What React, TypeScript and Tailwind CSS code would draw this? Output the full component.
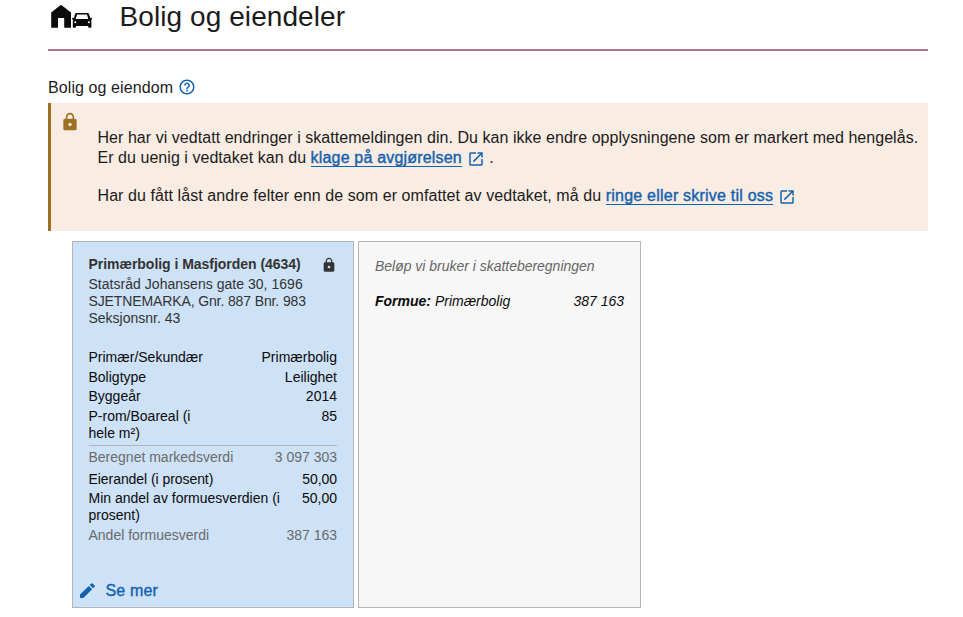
import type { ReactNode } from "react";
import { MdHelpOutline, MdLock, MdOpenInNew } from "react-icons/md";

function HouseCarIcon() {
  return (
    <svg className="ml-[3px] mt-[5px] h-[24px] w-[42px] shrink-0" viewBox="0 0 42 24" fill="#0b0b0b">
      <path d="M9 0.4 Q10 -0.4 11 0.4 L20 7.6 V22.8 H13.2 V13 H7 V22.8 H0.2 V7.6 Z" />
      <path
        fillRule="evenodd"
        d="M25.5 8 H36.5 Q37.7 8 38 9 L39.3 13 L41 12.7 V14.4 L40 14.7 Q40.4 15.5 40.4 16.5 V22 Q40.4 22.8 39.6 22.8 H38 Q37.2 22.8 37.2 22 V21 H25 V22 Q25 22.8 24 22.8 H22.6 Q21.8 22.8 21.8 22 V16.5 Q21.8 15.5 22.2 14.7 L21.2 14.4 V12.7 L22.9 13 L24 9 Q24.3 8 25.5 8 Z M26 9.6 L24.7 14 H37.3 L36 9.6 Z M24.3 16.2 A1 1 0 1 0 24.3 18.2 A1 1 0 1 0 24.3 16.2 Z M37.9 16.2 A1 1 0 1 0 37.9 18.2 A1 1 0 1 0 37.9 16.2 Z"
      />
    </svg>
  );
}

function PencilIcon() {
  return (
    <svg className="-mt-[2px] ml-[2px] size-[15px]" viewBox="0 0 15 15" fill="currentColor">
      <path d="M0 15 V11.6 L8.8 2.9 L12.1 6.2 L3.4 15 Z" />
      <path d="M9.7 2 L11.3 0.4 Q11.9 -0.1 12.5 0.4 L14.6 2.5 Q15.1 3.1 14.6 3.7 L13 5.3 Z" />
    </svg>
  );
}

function ExternalLink({ children, spacing }: { children: ReactNode; spacing: string }) {
  return (
    <a href="#" className="text-[#1362ae]">
      <span className={`border-b border-[#1362ae] [-webkit-text-stroke:0.4px_#1362ae] ${spacing}`}>{children}</span>
      <MdOpenInNew className="ml-[5px] inline-block size-[18px] align-[-5px]" />
    </a>
  );
}

type RowProps = { label: string; value: string; className: string; labelWidth?: string };

function Row({ label, value, className, labelWidth = "" }: RowProps) {
  return (
    <div className={`flex justify-between ${className}`}>
      <dt className={labelWidth}>{label}</dt>
      <dd className="whitespace-nowrap">{value}</dd>
    </div>
  );
}

export default function App() {
  return (
    <main className="h-[617px] overflow-hidden bg-white pl-12 pr-[35px] font-['Liberation_Sans',Arial,sans-serif] text-base text-[#1b1b1b]">
      <header className="flex h-[51px] border-b-2 border-[#ad7583]">
        <HouseCarIcon />
        <h1 className="ml-[26.5px] whitespace-nowrap text-[28px] leading-[33px] tracking-[0.08px]">Bolig og eiendeler</h1>
      </header>

      <h2 className="mt-[27px] flex h-[25px] items-start leading-5">
        <span className="tracking-[0.09px]">Bolig og eiendom</span>
        <MdHelpOutline className="ml-[5px] size-[18px] text-[#1362ae]" />
      </h2>

      <section className="flex h-32 border-l-[3px] border-[#9d7023] bg-[#f9ece3]">
        <MdLock className="ml-[8.5px] mt-[9px] size-5 shrink-0 text-[#9d7023]" />
        <div className="ml-[18px] mt-[25px] whitespace-nowrap leading-5">
          <p className="tracking-[0.046px]">
            Her har vi vedtatt endringer i skattemeldingen din. Du kan ikke endre opplysningene som er markert med hengelås.
            <br />
            Er du uenig i vedtaket kan du <ExternalLink spacing="tracking-[0.18px]">klage på avgjørelsen</ExternalLink> .
          </p>
          <p className="mt-[18px] tracking-[0.08px]">
            Har du fått låst andre felter enn de som er omfattet av vedtaket, må du{" "}
            <ExternalLink spacing="tracking-[0.22px]">ringe eller skrive til oss</ExternalLink>
          </p>
        </div>
      </section>

      <div className="ml-6 mt-[10px] flex h-[367px] gap-1 text-sm leading-[17px]">
        <article className="flex w-[282px] flex-col border border-[#b5b5b5] bg-[#cde1f7] pl-[15.5px] pr-4 text-[#0b0b0b]">
          <div className="mt-[14px] flex items-start justify-between text-[#333]">
            <h3 className="whitespace-nowrap font-bold tracking-[-0.03px]">Primærbolig i Masfjorden (4634)</h3>
            <MdLock className="mt-[1px] size-4" />
          </div>
          <p className="mt-[3px] whitespace-nowrap text-[#333]">
            <span className="tracking-[0.03px]">Statsråd Johansens gate 30, 1696</span>
            <br />
            <span className="tracking-[-0.12px]">SJETNEMARKA, Gnr. 887 Bnr. 983</span>
            <br />
            Seksjonsnr. 43
          </p>
          <dl className="mt-[22px]">
            <Row className="" label="Primær/Sekundær" value="Primærbolig" />
            <Row className="mt-[3px]" label="Boligtype" value="Leilighet" />
            <Row className="mt-[2px]" label="Byggeår" value="2014" />
            <Row className="mt-[3px]" labelWidth="w-[120px]" label="P-rom/Boareal (i hele m²)" value="85" />
            <Row
              className="mt-[3px] border-t border-[#b5b5b5] pt-[3px] text-[#6b6b6b]"
              label="Beregnet markedsverdi"
              value="3 097 303"
            />
            <Row className="mt-[5px] tracking-[-0.06px]" label="Eierandel (i prosent)" value="50,00" />
            <Row className="mt-[2px]" labelWidth="w-[200px]" label="Min andel av formuesverdien (i prosent)" value="50,00" />
            <Row className="mt-[3px] text-[#6b6b6b]" label="Andel formuesverdi" value="387 163" />
          </dl>
          <button className="-ml-[10.5px] mt-[37px] flex items-center gap-[10.5px] self-start text-base leading-5 text-[#1362ae]">
            <PencilIcon />
            <span className="tracking-[0.15px] [-webkit-text-stroke:0.4px_#1362ae]">Se mer</span>
          </button>
        </article>

        <article className="w-[283px] border border-[#b5b5b5] bg-[#f7f7f7] px-4 italic text-[#0b0b0b]">
          <p className="mt-4 tracking-[-0.02px] text-[#666]">Beløp vi bruker i skatteberegningen</p>
          <div className="mt-[18px] flex justify-between">
            <span>
              <b>Formue:</b> Primærbolig
            </span>
            <span>387 163</span>
          </div>
        </article>
      </div>
    </main>
  );
}
